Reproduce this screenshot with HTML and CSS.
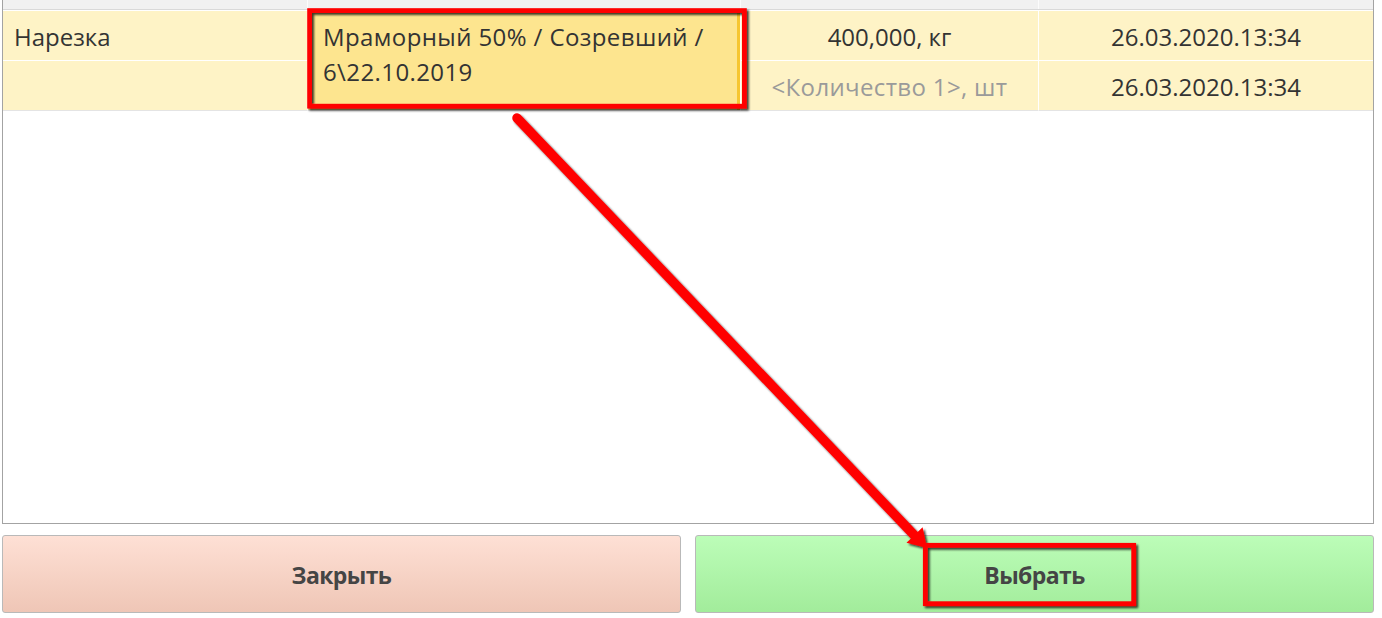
FILE: index.html
```html
<!DOCTYPE html>
<html lang="ru">
<head>
<meta charset="utf-8">
<title>Выбор партии</title>
<link rel="stylesheet" href="styles.css">
</head>
<body>
<div class="page">
  <div class="table">
    <div class="head">
      <div class="hc"></div>
      <div class="hc"></div>
      <div class="hc"></div>
      <div class="hc last"></div>
    </div>
    <div class="rows">
      <div class="cell c1 r1">Нарезка</div>
      <div class="cell c2 sel">Мраморный 50% / Созревший /<br>6\22.10.2019</div>
      <div class="cell c3 r1">400,000, кг</div>
      <div class="cell c4 r1">26.03.2020.13:34</div>
      <div class="cell c1 r2"></div>
      <div class="cell c3 r2 muted">&lt;Количество 1&gt;, шт</div>
      <div class="cell c4 r2">26.03.2020.13:34</div>
    </div>
  </div>
  <div class="buttons">
    <div class="btn close">Закрыть</div>
    <div class="btn pick">Выбрать</div>
  </div>
</div>
<svg class="annot" width="1382" height="618" viewBox="0 0 1382 618" xmlns="http://www.w3.org/2000/svg">
  <defs>
    <filter id="sh" x="-10%" y="-10%" width="120%" height="120%">
      <feDropShadow dx="2" dy="2" stdDeviation="1.2" flood-color="#000" flood-opacity="0.75"/>
    </filter>
  </defs>
  <g filter="url(#sh)">
    <rect x="309.6" y="10.6" width="434.8" height="95.6" fill="none" stroke="#ff0000" stroke-width="4.8"/>
    <rect x="925.3" y="545.3" width="208.4" height="58.4" fill="none" stroke="#ff0000" stroke-width="4.8"/>
    <line x1="517" y1="118" x2="915" y2="536" stroke="#ff0000" stroke-width="9.5" stroke-linecap="round"/>
    <polygon points="927,548 906.5,542.8 922.6,527.2" fill="#ff0000"/>
  </g>
</svg>
</body>
</html>
```

FILE: styles.css
```css
html, body {
  margin: 0;
  padding: 0;
  background: #ffffff;
}
body {
  position: relative;
  width: 1382px;
  height: 618px;
  overflow: hidden;
  font-family: "Open Sans", "Liberation Sans", sans-serif;
  color: #333333;
}
.page {
  margin-left: 2px;
  width: 1372px;
  display: flex;
  flex-direction: column;
}
.table {
  box-sizing: border-box;
  height: 524px;
  border: 1px solid #a3a3a3;
  border-top: none;
  background: #ffffff;
}
.head {
  display: grid;
  grid-template-columns: 305px 433px 298px 1fr;
  height: 9px;
  border-bottom: 1px solid #d9d9d9;
  background: #f1f1f1;
}
.hc {
  border-right: 1px solid #fcfcfc;
}
.hc.last {
  border-right: none;
}
.rows {
  margin-top: 1px;
  display: grid;
  grid-template-columns: 305px 433px 298px 1fr;
  grid-template-rows: 50px 50px;
}
.cell {
  box-sizing: border-box;
  background: #fef3c6;
  border-right: 1px solid #ffffff;
  font-size: 24px;
  line-height: 35px;
  padding-top: 8px;
  white-space: nowrap;
}
.r1 {
  grid-row: 1;
  border-bottom: 1px solid #ffffff;
}
.r2 {
  grid-row: 2;
  border-bottom: 1px solid #e4e4e4;
}
.c1 {
  grid-column: 1;
  padding-left: 11px;
}
.c2 {
  grid-column: 2;
  padding-left: 15px;
  letter-spacing: 0.4px;
}
.c3 {
  grid-column: 3;
  text-align: center;
}
.c4 {
  grid-column: 4;
  text-align: center;
  border-right: none;
}
.sel {
  grid-row: 1 / 3;
  background: #fde58f;
  border-right: 1px solid #ffffff;
  border-bottom: 1px solid #e4e4e4;
  box-shadow: inset -3px 0 0 #f6c631;
}
.muted {
  color: #9a9a9a;
  letter-spacing: 0.35px;
}
.buttons {
  margin-top: 11px;
  display: grid;
  grid-template-columns: 1fr 1fr;
  column-gap: 14px;
  height: 78px;
}
.btn {
  box-sizing: border-box;
  border: 1px solid #b9b9b9;
  border-radius: 3px;
  display: flex;
  align-items: center;
  justify-content: center;
  font-family: "Open Sans", "Liberation Sans", sans-serif;
  font-weight: 700;
  font-size: 23px;
  letter-spacing: -0.6px;
  color: #454545;
  padding-top: 2px;
}
.close {
  background: linear-gradient(#fee0d5, #efc6b6);
}
.pick {
  background: linear-gradient(#bcfdb8, #a2ec9b);
}
.annot {
  position: absolute;
  left: 0;
  top: 0;
  pointer-events: none;
}
```
